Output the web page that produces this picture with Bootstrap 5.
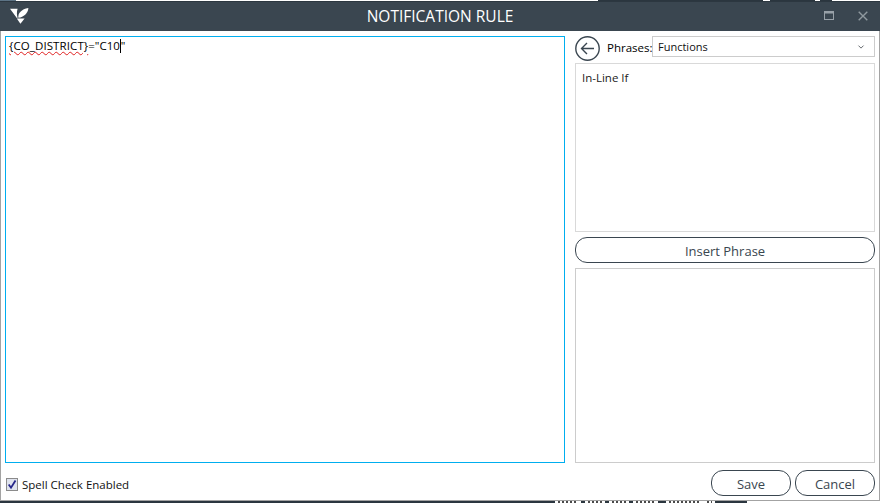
<!DOCTYPE html>
<html lang="en">
<head>
<meta charset="utf-8">
<title>Notification Rule</title>
<link href="https://cdn.jsdelivr.net/npm/bootstrap@5.3.0/dist/css/bootstrap.min.css" rel="stylesheet">
<style>
html,body{width:880px;height:503px;overflow:hidden;background:#fff;margin:0}
body{font-family:"Open Sans","Noto Sans",sans-serif;font-size:12px;color:#111;line-height:1.2}
.app-win{width:880px;height:503px}
.top-strip{height:1px;background:#fff;flex:none}
.ts-a{width:16px;background:#5c7385}
.ts-b{width:582px}
.ts-c{width:165px;background:#2b363f}
.ts-d{width:7px}
.ts-e{width:45px;background:#2b363f}
.ts-f{width:5px}
.ts-g{width:12px;background:#2b363f}
.title-bar{height:30px;background:#3a4650;border-top:1px solid #2c3740;color:#fff;flex:none;position:relative}
.title-text{font-size:15.5px;line-height:29px;height:29px;text-align:center;width:100%}
.logo-svg{position:absolute;left:10px;top:6px}
.ctl-max{position:absolute;left:824px;top:9px}
.ctl-x{position:absolute;left:858px;top:9px}
.body-area{flex:1 1 auto;min-height:0;border:solid #a3a3a3;border-width:0 1px 1px 1px;padding:5px 4px 0 4px}
.main-row{height:427px;gap:10px}
.editor-box{width:560px;border:1px solid #00aeef;padding:1px 3px;flex:none;font-size:11.5px;line-height:15px;color:#000}
.sq{text-decoration:underline wavy #e02020 1px;text-underline-offset:1px;letter-spacing:.1px}
.caret-bar{display:inline-block;width:1px;height:14px;background:#000;vertical-align:-3px}
.side-col{width:300px;flex:none}
.phrase-row{height:27px;margin-bottom:0}
.back-svg{flex:none;display:block}
.phrase-lbl{margin-left:7px;width:45px;flex:none;font-size:11.5px;position:relative;top:-2px;color:#000}
.phrase-sel.form-select{width:223px;height:21px;min-height:0;padding:0 20px 0 5px;font-size:11px;line-height:19px;border:1px solid #ccc;border-radius:0;background-size:8px 6px;background-position:right 9px center;color:#111;font-family:inherit;align-self:flex-start}
.list-panel{height:169px;border:1px solid #d9d9d9;padding:7px 6px;margin-bottom:5px;font-size:11.5px;color:#222}
.panel-two{flex:1 1 auto;border:1px solid #ccc}
.pill-btn.btn{border:1px solid #3a4650;border-radius:12px;background:#fff;color:#3a4650;font-size:13px;line-height:17px;padding:5px 0 2px;height:26px}
.pill-btn.btn:hover{background:#fff;color:#3a4650}
.insert-btn.btn{width:300px;margin-bottom:5px}
.foot-row{height:37px;padding-top:7px}
.check-wrap{display:flex;align-items:center;margin:8px 0 0 1px;font-size:11.5px;color:#111;gap:4px}
.chk-svg{display:block}
.act-btn.btn{width:80px}
.act-gap{gap:4px}
.bot-strip{height:2px;background:#fff;overflow:hidden;flex:none;align-items:flex-start}
.bs-dark{background:#2b363f;height:2px;flex:none}
.bs-a{width:555px}.bs-b{width:4px}.bs-c{width:8px}.bs-d{width:32px}
.bs-spk{height:2px;flex:none;margin:0 3px;background:repeating-linear-gradient(90deg,#4a4a4a 0 2px,#fff 2px 4px)}
.spk-1{width:20px}.spk-2{width:14px}.spk-3{width:19px}.spk-4{width:32px}.spk-5{width:5px}
</style>
</head>
<body>
<div class="app-win d-flex flex-column">
  <div class="top-strip d-flex">
    <div class="ts-a"></div><div class="ts-b"></div><div class="ts-c"></div><div class="ts-d"></div><div class="ts-e"></div><div class="ts-f"></div><div class="ts-g"></div>
  </div>
  <div class="title-bar d-flex align-items-center">
    <svg class="logo-svg" width="20" height="17" viewBox="0 0 20 17" aria-hidden="true">
      <path fill="#fff" d="M0 .8H7.6C6.6 4 6.8 7 7.6 9.8L6.8 10Z"/>
      <path fill="#fff" d="M18.4 0C18 5.4 13.6 9.2 8.4 9.8C7.6 5.5 11.5 1 18.4 0Z"/>
      <path fill="#fff" d="M6.8 10.6H14.6L10.4 15.8Z"/>
    </svg>
    <div class="title-text">NOTIFICATION RULE</div>
    <svg class="ctl-max" width="10" height="10" viewBox="0 0 10 10" aria-hidden="true">
      <rect x=".5" y=".5" width="9" height="8" fill="none" stroke="#98a1a8"/>
      <rect x="0" y="0" width="10" height="2.5" fill="#98a1a8"/>
    </svg>
    <svg class="ctl-x" width="10" height="10" viewBox="0 0 10 10" aria-hidden="true">
      <path d="M.7 .7 9.3 9.3M9.3 .7 .7 9.3" stroke="#8f999f" stroke-width="1.4" fill="none"/>
    </svg>
  </div>
  <div class="body-area d-flex flex-column">
    <div class="main-row d-flex">
      <div class="editor-box"><span class="sq">{CO_DISTRICT}</span>="C10<span class="caret-bar"></span>"</div>
      <div class="side-col d-flex flex-column">
        <div class="phrase-row d-flex align-items-start">
          <svg class="back-svg" width="25" height="25" viewBox="0 0 25 25" aria-hidden="true">
            <circle cx="12.5" cy="12.5" r="11.7" fill="#fff" stroke="#3a4650" stroke-width="1.4"/>
            <path d="M19 12.5H6.5M12 7 6.5 12.5 12 18" fill="none" stroke="#3a4650" stroke-width="1.4"/>
          </svg>
          <div class="phrase-lbl align-self-center">Phrases:</div>
          <select class="form-select phrase-sel" aria-label="Phrases"><option>Functions</option></select>
        </div>
        <div class="list-panel">In-Line If</div>
        <button type="button" class="btn pill-btn insert-btn">Insert Phrase</button>
        <div class="panel-two"></div>
      </div>
    </div>
    <div class="foot-row d-flex align-items-start justify-content-between">
      <label class="check-wrap">
        <svg class="chk-svg" width="12" height="13" viewBox="0 0 12 13" aria-hidden="true">
          <rect x=".5" y=".5" width="11" height="12" fill="#dfe3ee" stroke="#8b8b8b"/>
          <path d="M2.7 6.5 5 9.7 9.5 2.5" fill="none" stroke="#26268a" stroke-width="1.8"/>
        </svg>
        <span>Spell Check Enabled</span>
      </label>
      <div class="d-flex act-gap">
        <button type="button" class="btn pill-btn act-btn">Save</button>
        <button type="button" class="btn pill-btn act-btn">Cancel</button>
      </div>
    </div>
  </div>
  <div class="bot-strip d-flex">
    <div class="bs-dark bs-a"></div>
    <div class="bs-spk spk-1"></div><div class="bs-dark bs-b"></div>
    <div class="bs-spk spk-2"></div><div class="bs-dark bs-b"></div>
    <div class="bs-spk spk-2"></div><div class="bs-dark bs-b"></div>
    <div class="bs-spk spk-3"></div><div class="bs-dark bs-c"></div>
    <div class="bs-spk spk-4"></div><div class="bs-spk spk-5"></div><div class="bs-dark bs-d"></div>
  </div>
</div>
<script src="https://cdn.jsdelivr.net/npm/bootstrap@5.3.0/dist/js/bootstrap.bundle.min.js"></script>
</body>
</html>
